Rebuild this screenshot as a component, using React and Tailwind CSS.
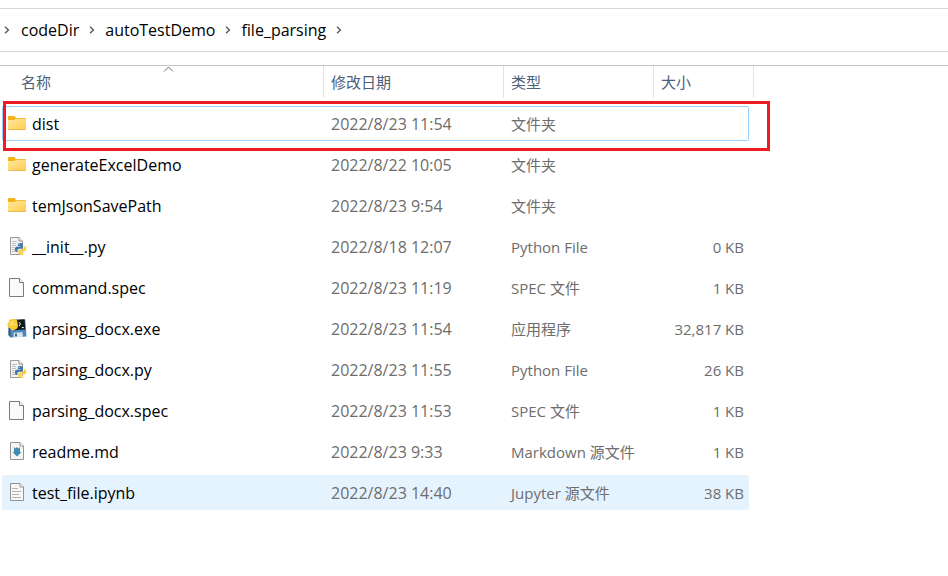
import React from "react";

function Chevron() {
  return (
    <svg width="6" height="8" viewBox="0 0 6 8" fill="none" stroke="#5f5f5f" strokeWidth="1.5" aria-hidden="true">
      <path d="M1 0.8 4.4 4 1 7.2" />
    </svg>
  );
}

function FolderIcon() {
  return (
    <svg width="20" height="20" viewBox="0 0 20 20" aria-hidden="true">
      <defs>
        <linearGradient id="folder" x1="0" y1="0" x2="1" y2="1">
          <stop offset="0" stopColor="#ffe8a0" />
          <stop offset="1" stopColor="#ffcd4e" />
        </linearGradient>
      </defs>
      <path d="M1 2.6c0-.4.3-.6.6-.6h5.900l1.500 2h9.400c.4 0 .6.2.6.6V9H1z" fill="#f5b21b" />
      <path d="M1 6h6.200l1.600-1.200H19v10.200c0 .4-.3.7-.7.7H1.700c-.4 0-.7-.3-.7-.7z" fill="url(#folder)" />
      <path d="M1.300 15.500h17.400" stroke="#e3a92c" strokeWidth="0.7" />
    </svg>
  );
}

function PythonMark() {
  return (
    <g transform="translate(4 1) scale(0.8 0.9)">
      <path d="M11.400 5.500c-2.300 0-2.900.9-2.900 2v1.600h3.400v.7H7c-1.600 0-2.300 1.300-2.300 2.900s.7 2.800 1.900 2.800h1.500v-1.700c0-1.100.9-1.900 2-1.900h3.200c.9 0 1.500-.7 1.500-1.600V7.500c0-1.300-1.100-2-3.400-2z" fill="#3f78ad" />
      <path d="M12.500 18.800c2.300 0 2.900-.9 2.900-1.900v-1.400H12v-.7h5c1.500 0 2.200-1.200 2.200-2.800s-.7-2.800-1.900-2.800h-1.400V11c0 1.100-.9 1.900-2 1.900h-3.200c-.9 0-1.600.7-1.600 1.600v2.300c0 1.300 1.100 2 3.400 2z" fill="#ffd03e" />
      <circle cx="10.200" cy="7.200" r=".6" fill="#fff" />
      <circle cx="13.700" cy="17.100" r=".6" fill="#fff" />
    </g>
  );
}

function PythonIcon() {
  return (
    <svg width="20" height="20" viewBox="0 0 20 20" aria-hidden="true">
      <path d="M3.500.5H12L15.500 4v13.500h-12z" fill="#f4f4f4" stroke="#9a9a9a" />
      <path d="M12 .5V4h3.500" fill="#fff" stroke="#8a8a8a" />
      <path d="M5 4.500h5M5 6.500h4M5 8.500h4M5 10.500h2M5 12.500h2M5 14.500h3" stroke="#bdbdbd" />
      <PythonMark />
    </svg>
  );
}

function BlankIcon() {
  return (
    <svg width="20" height="20" viewBox="0 0 20 20" aria-hidden="true">
      <path d="M2.500.5h10l4 4v14h-14z" fill="#fafafa" stroke="#7b7b7b" />
      <path d="M12.500.5v4h4" fill="#fff" stroke="#7b7b7b" />
    </svg>
  );
}

function ExeIcon() {
  return (
    <svg width="20" height="20" viewBox="0 0 20 20" aria-hidden="true">
      <path d="M2 1.500 18.300.5 19.500 17.500 3.500 18.500 1.500 16z" fill="#4d86b8" />
      <path d="M1.500 8 3.500 9v9.500L1.500 16z" fill="#2c5c88" />
      <path d="M6.500.8 17.600.2 18.200 10.500 6.500 11.300z" fill="#15181b" />
      <path d="M12 3.200 13.500 5l-1.500 2M14.800 8.600h2" fill="none" stroke="#fff" />
      <path d="M6.500 13.800 15.500 13.200 15.900 17.700 6.800 18.300z" fill="#dce4e9" />
      <path d="M8 14.500h2v3H8z" fill="#40698b" />
      <path d="M2.500.8c1.600-1 5-1 7 0 1 .7 1 2 .8 3.200.9.700.9 4.200-.3 5.500-1 1-2.500.8-3.500 1.800-1.500.6-2.700-.3-2.900-1.800C1.300 9 .3 7.500.5 5.500.6 4 1 3.500 2 3z" fill="#f6cf35" />
      <path d="M3 3.300h4M3 5.500c1.500-.5 4-.3 5.500 0" stroke="#fff0a0" strokeWidth=".8" fill="none" />
    </svg>
  );
}

function MarkdownIcon() {
  return (
    <svg width="20" height="20" viewBox="0 0 20 20" aria-hidden="true">
      <path d="M3.500.5h9.500L16.500 4v13.500h-13z" fill="#f5f5f5" stroke="#929292" />
      <path d="M13 .5V4h3.500" fill="#fff" stroke="#929292" />
      <path d="M7 5 8.500 6.500 10 5l1.500 1.500L13 5v5h1.500L10 14.500 5.500 10H7z" fill="#3f8cae" />
    </svg>
  );
}

function TextIcon() {
  return (
    <svg width="20" height="20" viewBox="0 0 20 20" aria-hidden="true">
      <path d="M3.500.5h9.500L16.500 4v13.500h-13z" fill="#f7f7f7" stroke="#929292" />
      <path d="M13 .5V4h3.500" fill="#fff" stroke="#929292" />
      <path d="M5 5.500h6M5 8.500h9M5 11.500h7M5 14.500h9" stroke="#b4b4b4" />
    </svg>
  );
}

const crumbs = ["codeDir", "autoTestDemo", "file_parsing"];

const files = [
  { name: "dist", date: "2022/8/23 11:54", type: "文件夹", size: "", Icon: FolderIcon, state: "focused" },
  { name: "generateExcelDemo", date: "2022/8/22 10:05", type: "文件夹", size: "", Icon: FolderIcon },
  { name: "temJsonSavePath", date: "2022/8/23 9:54", type: "文件夹", size: "", Icon: FolderIcon },
  { name: "__init__.py", date: "2022/8/18 12:07", type: "Python File", size: "0 KB", Icon: PythonIcon },
  { name: "command.spec", date: "2022/8/23 11:19", type: "SPEC 文件", size: "1 KB", Icon: BlankIcon },
  { name: "parsing_docx.exe", date: "2022/8/23 11:54", type: "应用程序", size: "32,817 KB", Icon: ExeIcon },
  { name: "parsing_docx.py", date: "2022/8/23 11:55", type: "Python File", size: "26 KB", Icon: PythonIcon },
  { name: "parsing_docx.spec", date: "2022/8/23 11:53", type: "SPEC 文件", size: "1 KB", Icon: BlankIcon },
  { name: "readme.md", date: "2022/8/23 9:33", type: "Markdown 源文件", size: "1 KB", Icon: MarkdownIcon },
  { name: "test_file.ipynb", date: "2022/8/23 14:40", type: "Jupyter 源文件", size: "38 KB", Icon: TextIcon, state: "hovered" },
];

const cellStates = {
  focused: "border-[#99d1ff]",
  hovered: "border-[#e5f3ff] bg-[#e5f3ff]",
  normal: "border-transparent",
};

function Heading({ label, sorted }) {
  return (
    <th scope="col" aria-sort={sorted ? "ascending" : undefined} className="p-0 align-top font-normal">
      <button
        type="button"
        className={
          "relative flex h-8 w-full items-center border-r border-[#e2e2e2] text-left text-[#4c607a] " +
          (sorted ? "pl-[19px]" : "pl-[7px]")
        }
      >
        {label}
        {sorted && (
          <svg className="absolute top-0 left-[161px]" width="11" height="7" viewBox="0 0 11 7" fill="none" stroke="#6d6d6d" aria-hidden="true">
            <path d="M1 5.500 5.500 1 10 5.500" />
          </svg>
        )}
      </button>
    </th>
  );
}

function FileRow({ file }) {
  const cell = "h-[35px] border-y p-0 " + cellStates[file.state || "normal"];
  const { Icon } = file;
  return (
    <tr>
      <td className={cell + " rounded-l-xs border-l text-base leading-5"}>
        <div className="flex items-center gap-[5px] pl-1">
          <Icon />
          <span className="text-black">{file.name}</span>
        </div>
      </td>
      <td className={cell + " pl-[7px] text-base leading-5"}>{file.date}</td>
      <td className={cell + " pl-[7px]"}>{file.type}</td>
      <td className={cell + " rounded-r-xs border-r pr-1 text-right"}>{file.size}</td>
    </tr>
  );
}

export default function App() {
  return (
    <div className="min-h-screen overflow-x-hidden bg-white pt-2 font-['Open_Sans','Noto_Sans_CJK_SC',sans-serif] text-[15px] leading-5 text-[#6d6d6d]">
      <nav aria-label="路径" className="border-y border-[#d9d9d9]">
        <ol className="flex h-[42px] items-center pl-1 text-base leading-5 text-black">
          <li className="flex w-[17px] items-center">
            <Chevron />
          </li>
          {crumbs.map((crumb) => (
            <li key={crumb} className="flex items-center">
              <a href="#">{crumb}</a>
              <span className="flex w-[26px] justify-center">
                <Chevron />
              </span>
            </li>
          ))}
        </ol>
      </nav>
      <main className="relative mt-[13px] border-t border-[#c0c0c0]">
        <table className="ml-[2px] w-[752px] table-fixed border-separate border-spacing-x-0 border-spacing-y-0">
          <colgroup>
            <col className="w-[322px]" />
            <col className="w-[180px]" />
            <col className="w-[150px]" />
            <col className="w-[95px]" />
            <col className="w-[5px]" />
          </colgroup>
          <thead>
            <tr className="h-10">
              <Heading label="名称" sorted />
              <Heading label="修改日期" />
              <Heading label="类型" />
              <th scope="col" colSpan={2} className="p-0 align-top font-normal">
                <button type="button" className="flex h-8 w-full items-center border-r border-[#e2e2e2] pl-[7px] text-left text-[#4c607a]">
                  大小
                </button>
              </th>
            </tr>
          </thead>
          <tbody>
            {files.map((file, i) => (
              <React.Fragment key={file.name}>
                {i > 0 && <tr className="h-[6px]" aria-hidden="true" />}
                <FileRow file={file} />
              </React.Fragment>
            ))}
          </tbody>
        </table>
        <div className="pointer-events-none absolute top-[35px] left-[3px] h-[50px] w-[767px] border-3 border-[#ed1c24]" />
      </main>
    </div>
  );
}
